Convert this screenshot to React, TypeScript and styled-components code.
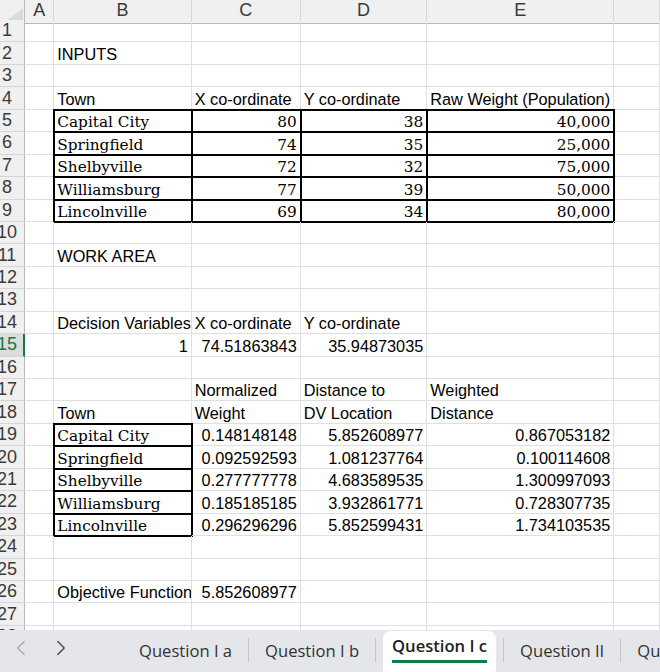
import React from 'react'
import styled, { createGlobalStyle, css } from 'styled-components'
import { ChevronLeft, ChevronRight } from 'lucide-react'

const GlobalStyle = createGlobalStyle`
  * { box-sizing: border-box; }
  html, body { margin: 0; padding: 0; background: #fff; }
`

const COLS = '25px 29.3px 137.4px 109px 126.6px 187px 1fr'
const ROW_H = 22.44
const GRID = '#dfdfdf'
const HEAD_LINE = '#b9b9b9'
const GREEN = '#107c41'

type CellData = { v: string; r?: boolean; s?: boolean; b?: boolean }
type ColKey = 'A' | 'B' | 'C' | 'D' | 'E' | 'F'
const COL_KEYS: ColKey[] = ['A', 'B', 'C', 'D', 'E', 'F']

const towns = ['Capital City', 'Springfield', 'Shelbyville', 'Williamsburg', 'Lincolnville']
const xs = ['80', '74', '72', '77', '69']
const ys = ['38', '35', '32', '39', '34']
const weights = ['40,000', '25,000', '75,000', '50,000', '80,000']
const norm = ['0.148148148', '0.092592593', '0.277777778', '0.185185185', '0.296296296']
const dist = ['5.852608977', '1.081237764', '4.683589535', '3.932861771', '5.852599431']
const wdist = ['0.867053182', '0.100114608', '1.300997093', '0.728307735', '1.734103535']

const sheet: Record<number, Partial<Record<ColKey, CellData>>> = {
  2: { B: { v: 'INPUTS' } },
  4: {
    B: { v: 'Town' },
    C: { v: 'X co-ordinate' },
    D: { v: 'Y co-ordinate' },
    E: { v: 'Raw Weight (Population)' },
  },
  11: { B: { v: 'WORK AREA' } },
  14: {
    B: { v: 'Decision Variables' },
    C: { v: 'X co-ordinate' },
    D: { v: 'Y co-ordinate' },
  },
  15: {
    B: { v: '1', r: true },
    C: { v: '74.51863843', r: true },
    D: { v: '35.94873035', r: true },
  },
  17: { C: { v: 'Normalized' }, D: { v: 'Distance to' }, E: { v: 'Weighted' } },
  18: { B: { v: 'Town' }, C: { v: 'Weight' }, D: { v: 'DV Location' }, E: { v: 'Distance' } },
  26: { B: { v: 'Objective Function' }, C: { v: '5.852608977', r: true } },
}

towns.forEach((t, i) => {
  sheet[5 + i] = {
    B: { v: t, s: true, b: true },
    C: { v: xs[i], s: true, r: true, b: true },
    D: { v: ys[i], s: true, r: true, b: true },
    E: { v: weights[i], s: true, r: true, b: true },
  }
  sheet[19 + i] = {
    B: { v: t, s: true, b: true },
    C: { v: norm[i], r: true },
    D: { v: dist[i], r: true },
    E: { v: wdist[i], r: true },
  }
})

const ACTIVE_ROW = 15
const TABS = ['Question I a', 'Question I b', 'Question I c', 'Question II', 'Question III']
const ACTIVE_TAB = 2

const Window = styled.div`
  width: 660px;
  height: 672px;
  display: flex;
  flex-direction: column;
  overflow: hidden;
  font-family: 'Liberation Sans', Arial, sans-serif;
`

const Sheet = styled.div`
  height: 630px;
  flex: none;
  overflow: hidden;
`

const GridRow = styled.div<{ $h: number }>`
  display: grid;
  grid-template-columns: ${COLS};
  height: ${p => p.$h}px;
`

const Corner = styled.div`
  background: #f0f0f0;
  border-right: 1px solid ${HEAD_LINE};
  border-bottom: 1px solid ${HEAD_LINE};
  display: flex;
  justify-content: flex-end;
  align-items: flex-end;
  padding: 0 1px 2px 0;

  &::after {
    content: '';
    border-style: solid;
    border-width: 0 0 13px 17px;
    border-color: transparent transparent #dadada transparent;
  }
`

const ColHead = styled.div`
  background: #f0f0f0;
  border-right: 1px solid #d6d6d6;
  border-bottom: 1px solid ${HEAD_LINE};
  display: flex;
  align-items: center;
  justify-content: center;
  padding-bottom: 2px;
  color: #3b3b3b;
  font-size: 18px;
`

const RowHead = styled.div<{ $active?: boolean }>`
  background: ${p => (p.$active ? '#dcdcdc' : '#f0f0f0')};
  border-bottom: 1px solid #d6d6d6;
  border-right: ${p => (p.$active ? `2px solid ${GREEN}` : `1px solid ${HEAD_LINE}`)};
  color: ${p => (p.$active ? GREEN : '#3b3b3b')};
  font-size: 18px;
  display: flex;
  align-items: center;
  overflow: hidden;
`

const RowNum = styled.span`
  width: 14px;
  display: flex;
  justify-content: center;
  white-space: nowrap;
`

const Cell = styled.div<{ $right?: boolean; $serif?: boolean; $boxed?: boolean }>`
  border-right: 1px solid ${GRID};
  border-bottom: 1px solid ${GRID};
  display: flex;
  align-items: flex-end;
  justify-content: ${p => (p.$right ? 'flex-end' : 'flex-start')};
  padding: 0 3px;
  min-width: 0;
  overflow: hidden;
  white-space: nowrap;
  color: #000;
  font-family: ${p => (p.$serif ? "'DejaVu Serif', Georgia, serif" : "'Liberation Sans', Arial, sans-serif")};
  font-size: ${p => (p.$serif ? '15.3px' : '16.3px')};
  ${p =>
    p.$boxed &&
    css`
      border-right-color: #000;
      border-bottom-color: #000;
      box-shadow: 0 0 0 1px #000, inset 1px 1px 0 0 #000;
    `}
`

const TabBar = styled.div`
  flex: 1;
  display: flex;
  align-items: stretch;
  background: #e4e6e9;
  font-family: 'Open Sans', 'Noto Sans', sans-serif;
  font-size: 16.6px;
  color: #333;
  overflow: hidden;
`

const Nav = styled.div`
  width: 123px;
  flex: none;
  display: flex;
  padding: 0 0 6px 1px;
`

const NavBtn = styled.div<{ $dim?: boolean }>`
  width: 40px;
  display: flex;
  align-items: center;
  justify-content: center;
  color: ${p => (p.$dim ? '#a8a8a8' : '#444')};
`

const Tab = styled.div<{ $active?: boolean }>`
  flex: none;
  margin: 0 7px;
  padding: 0 9px;
  display: flex;
  align-items: center;
  white-space: nowrap;
  ${p =>
    p.$active &&
    css`
      margin-top: 1px;
      align-items: flex-start;
      padding-top: 5px;
      background: #fff;
      border-radius: 8px 8px 0 0;
      color: #1f1f1f;
      font-weight: 600;
    `}
`

const TabLabel = styled.span<{ $active?: boolean }>`
  line-height: 20px;
  ${p =>
    p.$active &&
    css`
      padding-bottom: 4px;
      border-bottom: 3px solid ${GREEN};
    `}
`

const Divider = styled.div`
  width: 1px;
  flex: none;
  margin: 8px 0 10px;
  background: #c3c5c8;
`

export default function App() {
  const rows = Array.from({ length: 28 }, (_, i) => i + 1)
  return (
    <Window>
      <GlobalStyle />
      <Sheet>
        <GridRow $h={20}>
          <Corner />
          {COL_KEYS.map(k => (
            <ColHead key={k}>{k === 'F' ? '' : k}</ColHead>
          ))}
        </GridRow>
        {rows.map(r => (
          <GridRow key={r} $h={ROW_H}>
            <RowHead $active={r === ACTIVE_ROW}>
              <RowNum>{r}</RowNum>
            </RowHead>
            {COL_KEYS.map(k => {
              const c = sheet[r]?.[k]
              return (
                <Cell key={k} $right={c?.r} $serif={c?.s} $boxed={c?.b}>
                  {c?.v}
                </Cell>
              )
            })}
          </GridRow>
        ))}
      </Sheet>
      <TabBar>
        <Nav>
          <NavBtn $dim>
            <ChevronLeft size={26} strokeWidth={1.2} />
          </NavBtn>
          <NavBtn>
            <ChevronRight size={26} strokeWidth={1.2} />
          </NavBtn>
        </Nav>
        {TABS.map((t, i) => (
          <React.Fragment key={t}>
            {i > 0 && <Divider />}
            <Tab $active={i === ACTIVE_TAB}>
              <TabLabel $active={i === ACTIVE_TAB}>{t}</TabLabel>
            </Tab>
          </React.Fragment>
        ))}
      </TabBar>
    </Window>
  )
}
